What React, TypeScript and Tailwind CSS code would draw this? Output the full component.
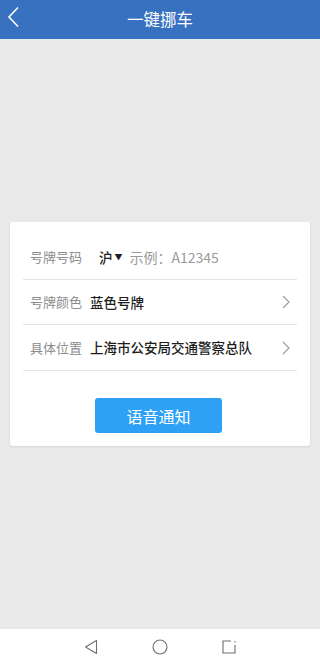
import React from "react";

const font = { fontFamily: '"Noto Sans CJK SC", "Noto Sans", sans-serif' };

function Chevron() {
  return (
    <svg width="8" height="14" viewBox="0 0 8 14" className="shrink-0">
      <path d="M1 1l6 6-6 6" fill="none" stroke="#9a9a9a" strokeWidth="1.1" />
    </svg>
  );
}

export default function App() {
  return (
    <div className="flex h-[664px] w-[320px] flex-col bg-[#e9e9e9]" style={font}>
      <header className="relative flex h-[39px] shrink-0 items-center justify-center bg-[#3871bf]">
        <svg width="14" height="22" viewBox="0 0 14 22" className="absolute left-[7px] top-[6px]">
          <path d="M11 1.5L2 11l9 9.5" fill="none" stroke="#fff" strokeWidth="1.6" />
        </svg>
        <h1 className="text-[16.5px] leading-none text-white">一键挪车</h1>
      </header>

      <main className="flex flex-1 items-center justify-center px-[10px]">
        <div className="w-full rounded-[3px] bg-white px-[13px] pb-[13px] pt-[13px] shadow-[0_1px_2px_rgba(0,0,0,0.08)]">
          <div className="flex h-[45px] items-center border-b border-[#e4e4e4] px-[7px] text-[13px]">
            <span className="w-[69px] text-[#8c8c8c]">号牌号码</span>
            <span className="text-[13.5px] font-medium text-[#1e1e1e]">沪</span>
            <span className="ml-[2px] text-[8px] text-[#1e1e1e]">▼</span>
            <span className="ml-[7px] text-[14px] text-[#9a9a9a]">示例：A12345</span>
          </div>
          <div className="flex h-[45px] items-center border-b border-[#e4e4e4] px-[7px] text-[13px]">
            <span className="w-[60px] text-[#8c8c8c]">号牌颜色</span>
            <span className="flex-1 text-[13.5px] font-medium text-[#1e1e1e]">蓝色号牌</span>
            <Chevron />
          </div>
          <div className="flex h-[46px] items-center border-b border-[#e4e4e4] px-[7px] text-[13px]">
            <span className="w-[60px] text-[#8c8c8c]">具体位置</span>
            <span className="flex-1 text-[13.5px] font-medium text-[#1e1e1e]">上海市公安局交通警察总队</span>
            <Chevron />
          </div>
          <div className="flex justify-center pt-[27px]">
            <button className="ml-[-3px] h-[35px] w-[127px] rounded-[3px] bg-[#2ea0f6] text-[16px] text-white">
              语音通知
            </button>
          </div>
        </div>
      </main>

      <nav className="flex h-[35px] shrink-0 items-center justify-center gap-[54px] bg-white">
        <svg width="14" height="16" viewBox="0 0 14 16">
          <path d="M12.5 1.5L1.5 8l11 6.5z" fill="none" stroke="#6e6e6e" strokeWidth="1.1" strokeLinejoin="round" />
        </svg>
        <svg width="16" height="16" viewBox="0 0 16 16">
          <circle cx="8" cy="8" r="7" fill="none" stroke="#6e6e6e" strokeWidth="1.1" />
        </svg>
        <svg width="14" height="14" viewBox="0 0 14 14">
          <path d="M9 1H1v12H13V5M13 1v1.5" fill="none" stroke="#6e6e6e" strokeWidth="1.1" />
        </svg>
      </nav>
    </div>
  );
}
